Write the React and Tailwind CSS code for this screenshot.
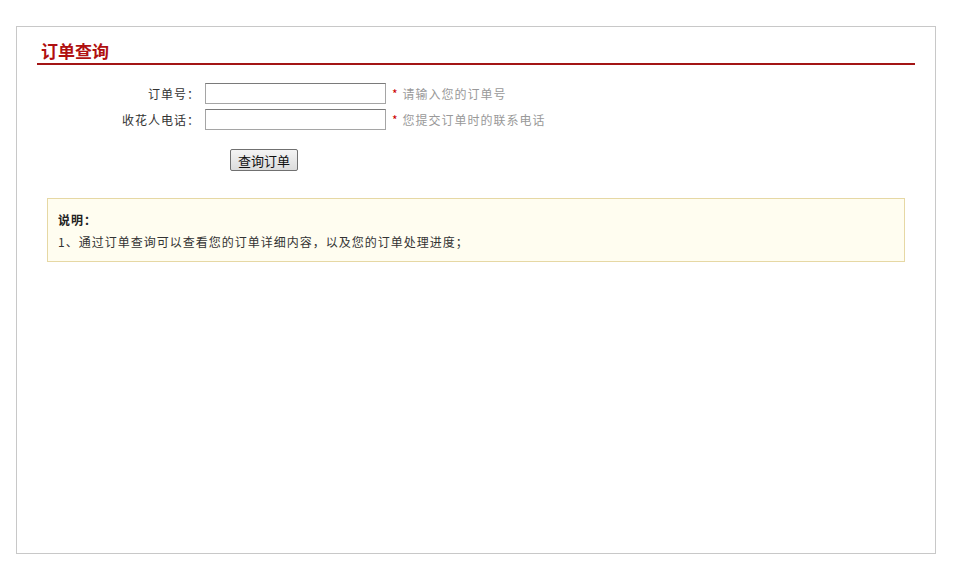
export default function App() {
  const font = { fontFamily: '"Noto Sans CJK SC", "Liberation Sans", sans-serif' };
  return (
    <div className="bg-white w-[965px] h-[578px] pt-[26px] pl-4" style={font}>
      <div className="w-[920px] h-[528px] border border-[#c8c8c8] px-5 pt-[13px]">
        {/* title */}
        <div className="border-b-2 border-[#a31515] pl-1 pb-[1px]">
          <h2 className="text-[17px] leading-[22px] font-bold text-[#b01010]">订单查询</h2>
        </div>

        {/* form */}
        <div className="pt-[18px] text-[12px] text-[#333] tracking-[1px]">
          <div className="flex items-center h-[21px]">
            <label className="w-[163px] text-right">订单号：</label>
            <input className="ml-[5px] w-[181px] h-[21px] border border-[#a5a5a5] border-t-[#7a7a7a] outline-none px-1" />
            <span className="ml-[6px] text-[#cc0000]">*</span>
            <span className="ml-[4px] text-[#999]">请输入您的订单号</span>
          </div>
          <div className="flex items-center h-[21px] mt-[5px]">
            <label className="w-[163px] text-right">收花人电话：</label>
            <input className="ml-[5px] w-[181px] h-[21px] border border-[#a5a5a5] border-t-[#7a7a7a] outline-none px-1" />
            <span className="ml-[6px] text-[#cc0000]">*</span>
            <span className="ml-[4px] text-[#999]">您提交订单时的联系电话</span>
          </div>
          <div className="pl-[193px] mt-[19px]">
            <button className="w-[68px] h-[22px] text-[13px] text-[#111] tracking-normal border border-[#707070] rounded-[2px] bg-gradient-to-b from-[#f4f4f4] to-[#dcdcdc] leading-none">
              查询订单
            </button>
          </div>
        </div>

        {/* note */}
        <div className="mx-[10px] mt-[27px] h-[64px] border border-[#e6d8a4] bg-[#fffdf0] px-[10px] pt-[10px] text-[12px] text-[#333] leading-[22px] tracking-[1px]">
          <p className="font-bold text-[#222]">说明：</p>
          <p>1、通过订单查询可以查看您的订单详细内容，以及您的订单处理进度；</p>
        </div>
      </div>
    </div>
  );
}
